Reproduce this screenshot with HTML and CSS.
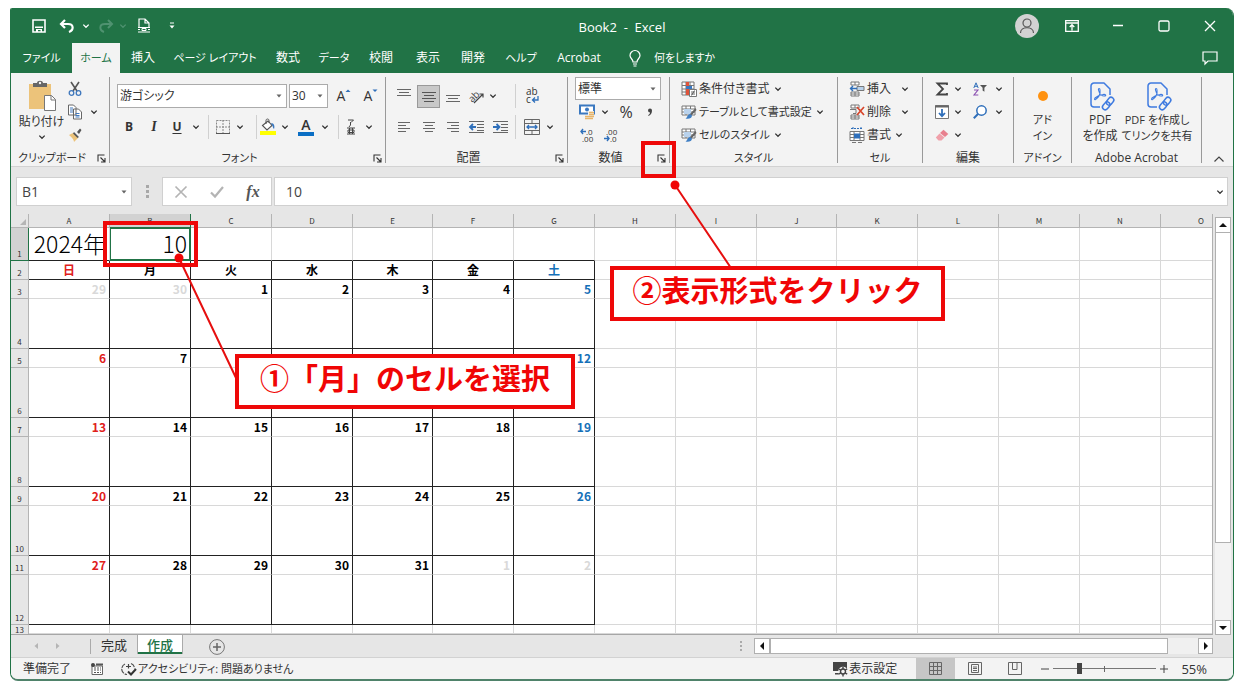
FILE: index.html
```html
<!DOCTYPE html>
<html lang="ja">
<head>
<meta charset="utf-8">
<meta name="viewport" content="width=device-width, initial-scale=1">
<title>Book2 - Excel</title>
<link rel="stylesheet" href="styles.css">
</head>
<body>
<svg class="sprite" aria-hidden="true">
  <symbol id="chev" viewBox="0 0 8 8"><path d="M1.3 2.6 4 5.3 6.7 2.6" fill="none" stroke="currentColor" stroke-width="1.3"/></symbol>
  <symbol id="caret" viewBox="0 0 8 8"><path d="M1.5 2.5h5L4 5.5z" fill="currentColor"/></symbol>
  <symbol id="launch" viewBox="0 0 9 9"><path d="M1 7.5V1h6.5M3.5 3.5l4 4M8 4v4H4" fill="none" stroke="currentColor" stroke-width="1.1"/></symbol>
  <symbol id="pdf" viewBox="0 0 26 30"><g fill="none" stroke="#3f7be0" stroke-width="1.5" stroke-linejoin="round"><path d="M10 25H4a3 3 0 0 1-3-3V4a3 3 0 0 1 3-3h10l6 6v6"/><path d="M5.500 17.500c3-2 5-6 4.500-9.500 0-2-2-2-1.500 0 .8 4 3.500 6.500 6.500 6 1.500-.5.5-2-2-1.500-3 .3-6 1.500-8 3.500-1 1.500-.3 2 .5 1.500z" stroke-width="1.100"/><g transform="rotate(-50 18.500 21.500)"><rect x="11" y="18.500" width="8.500" height="5.500" rx="2.700"/><rect x="17" y="18.500" width="8.500" height="5.500" rx="2.700"/></g></g></symbol>
  <symbol id="tbl" viewBox="0 0 16 16"><path d="M1 2h13v9H1zM1 5h13M1 8h13M5 2v9M9.500 2v9" fill="#fff" stroke="#777"/><path d="M3 5h7v5H3z" fill="#b9d2ec"/><path d="M14.500 4 9 10l1.500 1.500L15.500 6z" fill="#666"/><path d="M9 10c-3 .5-2 3-4.500 4.500 3 .8 6.500 0 6.500-3z" fill="#3f7fc4"/></symbol>
  <symbol id="cells" viewBox="0 0 16 16"><path d="M2 1h8v3H2zM6 1v3M2 11h8v4H2zM6 11v4M2 13h8" fill="#fff" stroke="#777"/></symbol>
</svg>

<div class="page">
<main class="window">

  <header class="titlebar">
    <div class="quick">
      <button aria-label="上書き保存"><svg width="14" height="14" viewBox="0 0 14 14"><path d="M1 1h12v12H1z" fill="none" stroke="#fff" stroke-width="1.6"/><path d="M3 7.500h8V9H3zM4 10h6v3H8.500v-2H6v2H4z" fill="#fff"/></svg></button>
      <button aria-label="元に戻す"><svg width="16" height="14" viewBox="0 0 16 14"><path d="M6 1 2 5l4 4M2 5h7c6 0 6 6 1 8" fill="none" stroke="#fff" stroke-width="2.2"/></svg></button>
      <button aria-label="元に戻す一覧"><svg class="chev"><use href="#chev"/></svg></button>
      <button class="dim" aria-label="やり直し"><svg width="16" height="14" viewBox="0 0 16 14"><path d="M10 1l4 4-4 4M14 5H7C1 5 1 11 6 13" fill="none" stroke="currentColor" stroke-width="2"/></svg></button>
      <button class="dim" aria-label="やり直し一覧"><svg class="chev"><use href="#chev"/></svg></button>
      <button aria-label="印刷プレビュー"><svg width="14" height="16" viewBox="0 0 14 16"><path d="M2 9V1h6l4 4v4M8 1v4h4" fill="none" stroke="#fff" stroke-width="1.200"/><path d="M1 9.500h12M1 11.500h2M11 11.500h2M5 10.500h4v2H5zM1 14h12" fill="none" stroke="#fff"/></svg></button>
      <button aria-label="クイック アクセスのカスタマイズ"><svg width="8" height="8" viewBox="0 0 8 8"><path d="M2 1h4" stroke="#fff"/><path d="M1.500 3.500h5L4 6.500z" fill="#fff"/></svg></button>
    </div>
    <h1 class="title">Book2&nbsp; -&nbsp; Excel</h1>
    <div class="controls">
      <button class="avatar" aria-label="アカウント"><svg width="24" height="24" viewBox="0 0 24 24"><circle cx="12" cy="12" r="12" fill="#d2d2d2"/><g fill="none" stroke="#555" stroke-width="1.200"><circle cx="12" cy="9" r="4"/><path d="M5.500 19c0-7 13-7 13 0"/></g></svg></button>
      <button aria-label="リボンの表示オプション"><svg width="14" height="12" viewBox="0 0 14 12"><path d="M.7.700h12.600v10.600H.7zM.7 3h12.600M7 10.500V5M4.700 7 7 4.700 9.300 7" fill="none" stroke="#fff" stroke-width="1.300"/></svg></button>
      <button aria-label="最小化"><svg width="12" height="12" viewBox="0 0 12 12"><path d="M1 5.500h10" stroke="#fff" stroke-width="1.300"/></svg></button>
      <button aria-label="最大化"><svg width="12" height="12" viewBox="0 0 12 12"><rect x="1" y="1" width="10" height="10" rx="1.500" fill="none" stroke="#fff" stroke-width="1.300"/></svg></button>
      <button aria-label="閉じる"><svg width="12" height="12" viewBox="0 0 12 12"><path d="M1 1l10 10M11 1 1 11" stroke="#fff" stroke-width="1.300"/></svg></button>
    </div>
  </header>

  <nav class="tabs">
    <button class="kana">ファイル</button><button class="kana active">ホーム</button><button>挿入</button><button class="kana">ページ レイアウト</button><button>数式</button><button class="kana">データ</button><button>校閲</button><button>表示</button><button>開発</button><button class="kana">ヘルプ</button><button>Acrobat</button>
    <button class="tell"><svg width="12" height="17" viewBox="0 0 12 17"><path d="M4 12c0-3-3-3.500-3-6.500a5 5 0 0 1 10 0c0 3-3 3.500-3 6.500zM4 14h4M4.500 16h3" fill="none" stroke="#fff" stroke-width="1.200"/></svg><span class="kana">何をしますか</span></button>
    <button class="comment" aria-label="コメント"><svg width="16" height="14" viewBox="0 0 16 14"><path d="M1 1h14v9H6l-3 3v-3H1z" fill="none" stroke="#fff" stroke-width="1.200"/></svg></button>
  </nav>

  <section class="ribbon" aria-label="ホーム">
    <div class="group">
      <div class="body clip">
        <button class="paste" aria-label="貼り付け"><svg width="32" height="32" viewBox="0 0 32 32"><path d="M3 4h22v25H3z" fill="#ecc37a"/><path d="M7 3h4c0-3 6-3 6 0h4v4H7z" fill="#666"/><circle cx="14" cy="3" r="1.200" fill="#f3f3f3"/><path d="M18.500 15.500h7l4 4v11h-11z" fill="#fff" stroke="#777"/><path d="M25 15.500v4.500h4.500" fill="none" stroke="#777"/></svg><span>貼り付け</span><svg class="chev"><use href="#chev"/></svg></button>
        <div class="clip-tools">
          <button aria-label="切り取り"><svg width="14" height="16" viewBox="0 0 14 16"><path d="M3 1l6 9M11 1 5 10" stroke="#555" stroke-width="1.600"/><circle cx="3.500" cy="12" r="2.300" fill="none" stroke="#4179bd" stroke-width="1.300"/><circle cx="10.500" cy="12" r="2.300" fill="none" stroke="#4179bd" stroke-width="1.300"/></svg></button><i></i>
          <button aria-label="コピー"><svg width="14" height="16" viewBox="0 0 14 16"><path d="M.5 1h5l2.500 2.500V11H.5zM5.500 5h5L13.500 8v7h-8z" fill="#fff" stroke="#666"/><path d="M2 4h3M2 6h3M2 8h3M7.500 9.500h4M7.500 11.500h4M7.500 13h4" stroke="#4179bd"/></svg></button><button aria-label="コピーの種類"><svg class="chev"><use href="#chev"/></svg></button>
          <button aria-label="書式のコピー"><svg width="14" height="14" viewBox="0 0 14 14"><path d="M1 7l4-2 5 5-4 4c0-3-3-5-5-7z" fill="#ecc37a"/><path d="M6 4l5 5-1.500 1L5 5.500zM9 4l3-3.500 1.500 1.500L11 6z" fill="#555"/></svg></button><i></i>
        </div>
      </div>
      <div class="foot"><span class="kana">クリップボード</span><button aria-label="クリップボードの詳細"><svg class="launch"><use href="#launch"/></svg></button></div>
    </div>

    <div class="group">
      <div class="body two font">
        <div class="row font1">
          <label class="combo"><select aria-label="フォント"><option>游ゴシック</option></select><svg class="caret"><use href="#caret"/></svg></label>
          <label class="combo"><select aria-label="フォント サイズ"><option>30</option></select><svg class="caret"><use href="#caret"/></svg></label>
          <button class="letter" aria-label="フォント サイズの拡大"><span>A</span><svg width="6" height="14" viewBox="0 0 6 14"><path d="M.5 4 3 1.500 5.500 4z" fill="#2f6fba"/></svg></button>
          <button class="letter" aria-label="フォント サイズの縮小"><span>A</span><svg width="6" height="14" viewBox="0 0 6 14"><path d="M.5 1.500 3 4l2.500-2.500z" fill="#2f6fba"/></svg></button>
        </div>
        <div class="row font2">
          <button class="b">B</button><button class="b it">I</button><button class="b un">U</button><button aria-label="下線の種類"><svg class="chev"><use href="#chev"/></svg></button><i class="sep"></i>
          <button aria-label="罫線"><svg width="14" height="14" viewBox="0 0 14 14"><path d="M.5.5h13v13H.5zM7 0v14M0 7h14" fill="none" stroke="#888" stroke-dasharray="2 1"/><path d="M0 13.500h14" stroke="#555"/></svg></button><button aria-label="罫線の種類"><svg class="chev"><use href="#chev"/></svg></button><i class="sep end"></i>
          <button aria-label="塗りつぶしの色"><svg width="16" height="18" viewBox="0 0 16 18"><path d="M2.500 7.500 8 3l4 4.500L7 12z" fill="#fff" stroke="#555" stroke-width="1.100"/><path d="M6 6V2.500c0-2 3-2 3 0V5" fill="none" stroke="#555"/><path d="M11 5c3 0 4 3 3 6-1.500-1-1-3-2-4z" fill="#3a78c0"/><path d="M0 13h16v4H0z" fill="#ff0"/></svg></button><button aria-label="色の選択"><svg class="chev"><use href="#chev"/></svg></button>
          <button class="fcolor">A</button><button aria-label="文字色の選択"><svg class="chev"><use href="#chev"/></svg></button><i class="sep end"></i>
          <button aria-label="ふりがな"><svg width="10" height="16" viewBox="0 0 10 16"><path d="M2 1h5.500L5 3.500M4.500 3v3L3 8M1 9h8M1 15h8M3.500 9v6M6.500 9v6M2 11h6v2.500H2z" fill="none" stroke="#444"/></svg></button><button aria-label="ふりがなの設定"><svg class="chev"><use href="#chev"/></svg></button>
        </div>
      </div>
      <div class="foot"><span class="kana">フォント</span><button aria-label="フォントの詳細"><svg class="launch"><use href="#launch"/></svg></button></div>
    </div>

    <div class="group">
      <div class="body two align">
        <div class="row agrid">
          <button aria-label="上揃え"><svg width="14" height="16" viewBox="0 0 14 16"><path d="M0 1.500h14M2 4.500h10M0 7.500h14" stroke="#666"/></svg></button>
          <button class="on" aria-label="上下中央揃え"><svg width="14" height="16" viewBox="0 0 14 16"><path d="M0 4.500h14M2 7.500h10M0 10.500h14M2 13.500h10" stroke="#555"/></svg></button>
          <button aria-label="下揃え"><svg width="14" height="16" viewBox="0 0 14 16"><path d="M0 7.500h14M2 10.500h10M0 13.500h14" stroke="#666"/></svg></button>
          <button aria-label="方向"><svg width="16" height="16" viewBox="0 0 16 16"><text x="-1" y="11" transform="rotate(-45 6 8)" font-size="10" fill="#444">ab</text><path d="M5 15 14 6M10.500 6H14v3.500" fill="none" stroke="#444" stroke-width="1.200"/></svg></button>
          <button class="start" aria-label="方向の選択"><svg class="chev"><use href="#chev"/></svg></button><i class="sep"></i>
          <button class="wrap" aria-label="折り返して全体を表示する"><svg width="14" height="18" viewBox="0 0 14 18"><text x="1" y="8" font-size="10" fill="#333">ab</text><text x="1" y="16" font-size="10" fill="#333">c</text><path d="M13 9v4H8M10 10.500 7.500 13l2.500 2.500" fill="none" stroke="#2f6fba" stroke-width="1.300"/></svg></button><i></i>
        </div>
        <div class="row agrid">
          <button aria-label="左揃え"><svg width="12" height="12" viewBox="0 0 12 12"><path d="M0 1.500h12M0 4.500h8M0 7.500h12M0 10.500h8" stroke="#666"/></svg></button>
          <button aria-label="中央揃え"><svg width="12" height="12" viewBox="0 0 12 12"><path d="M0 1.500h12M2 4.500h8M0 7.500h12M2 10.500h8" stroke="#666"/></svg></button>
          <button aria-label="右揃え"><svg width="12" height="12" viewBox="0 0 12 12"><path d="M0 1.500h12M4 4.500h8M0 7.500h12M4 10.500h8" stroke="#666"/></svg></button>
          <button aria-label="インデントを減らす"><svg width="16" height="14" viewBox="0 0 16 14"><path d="M0 1.500h15M8 4.500h7M8 7.500h7M8 10.500h7M0 12.500h15" stroke="#666"/><path d="M7 7H1M4 4 1 7l3 3" fill="none" stroke="#2f6fba" stroke-width="1.800"/></svg></button>
          <button aria-label="インデントを増やす"><svg width="16" height="14" viewBox="0 0 16 14"><path d="M0 1.500h15M8 4.500h7M8 7.500h7M8 10.500h7M0 12.500h15" stroke="#666"/><path d="M0 7h6M3.500 4l3 3-3 3" fill="none" stroke="#2f6fba" stroke-width="1.800"/></svg></button><i class="sep"></i>
          <button aria-label="セルを結合して中央揃え"><svg width="16" height="16" viewBox="0 0 16 16"><path d="M.5.500h15v15H.5zM.5 4.500h15M.5 11.500h15M8 .5v4M8 11.500v4" fill="none" stroke="#666"/><path d="M3 8h10M5 6 3 8l2 2M11 6l2 2-2 2" fill="none" stroke="#2f6fba" stroke-width="1.300"/></svg></button>
          <button aria-label="結合の種類"><svg class="chev"><use href="#chev"/></svg></button>
        </div>
      </div>
      <div class="foot"><span>配置</span><button aria-label="配置の詳細"><svg class="launch"><use href="#launch"/></svg></button></div>
    </div>

    <div class="group">
      <div class="body three number">
        <label class="combo"><select aria-label="表示形式"><option>標準</option></select><svg class="caret"><use href="#caret"/></svg></label>
        <div class="row ngrid">
          <button aria-label="通貨表示形式"><svg width="16" height="16" viewBox="0 0 16 16"><path d="M1 1.500h14v8H1z" fill="#fff" stroke="#3a78c0" stroke-width="2"/><circle cx="8" cy="5.500" r="2" fill="#3a78c0"/><path d="M9 7h6v8H5v-4h4z" fill="#f3f3f3"/><path d="M10 8.500h5M10 10.500h5M6 12.500h9M6 14.500h8" stroke="#e8b56a" stroke-width="1.400"/></svg></button><button aria-label="通貨の選択"><svg class="chev"><use href="#chev"/></svg></button><button class="pct">%</button><button aria-label="桁区切りスタイル"><svg width="6" height="8" viewBox="0 0 6 8"><path d="M1 2.500a2 2 0 0 1 4 0C5 5 4 7 1.500 8l-.3-.8C2.500 6.500 3 5.500 3 4.500a2 2 0 0 1-2-2z" fill="#444"/></svg></button>
        </div>
        <div class="row ngrid dec">
          <button aria-label="小数点以下の表示桁数を増やす"><svg width="14" height="16" viewBox="0 0 14 16"><path d="M6 4.500H1M3 2 1 4.500 3 7" fill="none" stroke="#2f6fba" stroke-width="1.400"/><text x="6" y="8" font-size="8" fill="#333">.0</text><text x="2" y="15" font-size="8" fill="#333">.00</text></svg></button>
          <button aria-label="小数点以下の表示桁数を減らす"><svg width="14" height="16" viewBox="0 0 14 16"><text x="2" y="8" font-size="8" fill="#333">.00</text><path d="M0 11.500h5M3 9l2 2.500L3 14" fill="none" stroke="#2f6fba" stroke-width="1.400"/><text x="6" y="15" font-size="8" fill="#333">.0</text></svg></button>
        </div>
      </div>
      <div class="foot"><span>数値</span><button aria-label="表示形式の詳細"><svg class="launch"><use href="#launch"/></svg></button></div>
    </div>

    <div class="group">
      <div class="body three style">
        <button class="item"><svg width="16" height="16" viewBox="0 0 16 16"><path d="M1 1h12v13H1zM1 4.500h12M1 8h12M1 11h12M5 1v13M9 1v13" fill="#fff" stroke="#777"/><path d="M5 1h3v4H5zM5 8h3v6H5z" fill="#e0533a"/><path d="M5 5h6v3H5z" fill="#3a78c0"/><path d="M8.500 8.500h7v7h-7z" fill="#fff" stroke="#777"/><path d="M10 11h4M10 13h4M13.500 9.500l-3 5" stroke="#444" stroke-width=".8"/></svg><span>条件付き書式</span><svg class="chev"><use href="#chev"/></svg></button>
        <button class="item"><svg width="16" height="16"><use href="#tbl"/></svg><span class="kana">テーブルとして書式設定</span><svg class="chev"><use href="#chev"/></svg></button>
        <button class="item"><svg width="16" height="16"><use href="#tbl"/></svg><span class="kana">セルのスタイル</span><svg class="chev"><use href="#chev"/></svg></button>
      </div>
      <div class="foot"><span class="kana">スタイル</span></div>
    </div>

    <div class="group">
      <div class="body three cellg">
        <button class="item wide"><svg width="16" height="16" viewBox="0 0 16 16"><use href="#cells"/><path d="M8 5.500h7v4H8z" fill="#b9d2ec" stroke="#777"/><path d="M8 7.500H1M4 5 1.500 7.500 4 10" fill="none" stroke="#2f6fba" stroke-width="1.400"/></svg><span>挿入</span><svg class="chev"><use href="#chev"/></svg></button>
        <button class="item wide"><svg width="16" height="16" viewBox="0 0 16 16"><use href="#cells"/><path d="M1 5.500h6v4H4" fill="none" stroke="#777"/><path d="M8 3l7 8M15 3 8 11" stroke="#d8452a" stroke-width="1.700"/></svg><span>削除</span><svg class="chev"><use href="#chev"/></svg></button>
        <button class="item"><svg width="16" height="16" viewBox="0 0 16 16"><path d="M2 1.500h12M4 0v3M12 0v3" stroke="#2f6fba" stroke-dasharray="2 1"/><path d="M1 4.500h14v9H1zM1 7.500h14M1 10.500h14M5 4.500v9M11 4.500v9" fill="#fff" stroke="#777"/><path d="M5 6.500h6v5H5z" fill="#2f6fba"/><path d="M3 15.500h4M9 15.500h4" stroke="#777"/></svg><span>書式</span><svg class="chev"><use href="#chev"/></svg></button>
      </div>
      <div class="foot"><span class="kana">セル</span></div>
    </div>

    <div class="group">
      <div class="body three edit">
        <div class="row egrid">
          <button aria-label="オート SUM"><svg width="12" height="14" viewBox="0 0 12 14"><path d="M11 3V1.500H1.500L7 7l-5.500 5.500H11V11" fill="none" stroke="#444" stroke-width="1.800"/></svg></button><button aria-label="関数の選択"><svg class="chev"><use href="#chev"/></svg></button>
          <button aria-label="並べ替えとフィルター"><svg width="14" height="14" viewBox="0 0 14 14"><path d="M.8 6 3 .8 5.200 6M1.500 4.300h3" fill="none" stroke="#2f6fba"/><path d="M1 8h4L1 13h4.300" fill="none" stroke="#8a4fb0" stroke-width="1.100"/><path d="M7 3h7l-2.600 2.800v4L9.600 8.500V5.800z" fill="#555"/></svg></button><button aria-label="並べ替えの選択"><svg class="chev"><use href="#chev"/></svg></button>
        </div>
        <div class="row egrid">
          <button aria-label="フィル"><svg width="14" height="14" viewBox="0 0 14 14"><path d="M.5.500h13v13H.5z" fill="#fff" stroke="#777"/><path d="M0 1.500h14" stroke="#666" stroke-width="2"/><path d="M7 4v7M4 8l3 3.200L10 8" fill="none" stroke="#2f6fba" stroke-width="1.800"/></svg></button><button aria-label="フィルの選択"><svg class="chev"><use href="#chev"/></svg></button>
          <button aria-label="検索と選択"><svg width="14" height="14" viewBox="0 0 14 14"><circle cx="8.500" cy="5.500" r="4.700" fill="#fff" stroke="#2f6fba" stroke-width="1.500"/><path d="M5.200 8.800.8 13.200" stroke="#2f6fba" stroke-width="2"/></svg></button><button aria-label="検索の選択"><svg class="chev"><use href="#chev"/></svg></button>
        </div>
        <div class="row egrid">
          <button aria-label="クリア"><svg width="14" height="12" viewBox="0 0 14 12"><path d="M8.500.800 13.300 5 10 8 5 4z" fill="#e8808e"/><path d="M4.500 4.500 9.500 8.500 6.500 11.500H3.500L.8 8.500z" fill="#f0a0aa"/></svg></button><button aria-label="クリアの選択"><svg class="chev"><use href="#chev"/></svg></button>
        </div>
      </div>
      <div class="foot"><span>編集</span></div>
    </div>

    <div class="group">
      <div class="body big">
        <button><svg width="26" height="30" viewBox="0 0 26 30"><circle cx="13" cy="14" r="5" fill="#ff9210"/></svg><span class="kana">アド<br>イン</span></button>
      </div>
      <div class="foot"><span class="kana">アドイン</span></div>
    </div>

    <div class="group">
      <div class="body big acro">
        <button><svg width="26" height="30"><use href="#pdf"/></svg><span>PDF<br>を作成</span></button>
        <button class="share"><svg width="26" height="30"><use href="#pdf"/></svg><span>PDF を作成し<br>てリンクを共有</span></button>
      </div>
      <div class="foot"><span>Adobe Acrobat</span></div>
    </div>
    <button class="collapse" aria-label="リボンを折りたたむ"><svg width="12" height="8" viewBox="0 0 12 8"><path d="M1.500 6.500 6 2l4.500 4.500" fill="none" stroke="#444" stroke-width="1.200"/></svg></button>
  </section>

  <section class="formula">
    <label class="combo name"><input aria-label="名前ボックス" value="B1"><svg class="caret"><use href="#caret"/></svg></label>
    <svg class="dots" width="3" height="13" viewBox="0 0 3 13"><path d="M0 0h3v3H0zM0 5h3v3H0zM0 10h3v3H0z" fill="#a8a8a8"/></svg>
    <div class="fx">
      <button aria-label="キャンセル"><svg width="14" height="12" viewBox="0 0 14 12"><path d="M1.500.5l11 11M12.500.5l-11 11" stroke="#b4b4b4" stroke-width="1.700"/></svg></button>
      <button aria-label="入力"><svg width="14" height="12" viewBox="0 0 14 12"><path d="M1 6.500 5 10.500 13 1" fill="none" stroke="#b4b4b4" stroke-width="2.200"/></svg></button>
      <button class="fn">fx</button>
    </div>
    <label class="combo bar"><input aria-label="数式バー" value="10"><svg class="chev"><use href="#chev"/></svg></label>
  </section>

  <section class="sheet">
    <div class="grid">
      <table>
        <colgroup><col class="rh"><col><col><col><col><col class="n"><col><col><col><col><col class="n"><col><col><col><col><col></colgroup>
        <thead><tr><th class="corner" aria-label="すべて選択"><svg width="6" height="6" viewBox="0 0 6 6"><path d="M6 0v6H0z" fill="#b5b5b5"/></svg></th><th>A<th class="sel">B<th>C<th>D<th>E<th>F<th>G<th>H<th>I<th>J<th>K<th>L<th>M<th>N<th>O</tr></thead>
        <tbody>
        <tr class="r1"><th class="sel">1</th><td class="k">2024年<td class="k cur">10<td class="k"><td class="k"><td class="k"><td class="k"><td class="k"><td><td><td><td><td><td><td><td></tr>
        <tr class="r2"><th>2</th><td class="k red">日<td class="k">月<td class="k">火<td class="k">水<td class="k">木<td class="k">金<td class="k blue">土<td><td><td><td><td><td><td><td></tr>
        <tr class="d"><th>3</th><td class="k off">29<td class="k off">30<td class="k">1<td class="k">2<td class="k">3<td class="k">4<td class="k blue">5<td><td><td><td><td><td><td><td></tr>
        <tr class="m"><th>4</th><td class="k"><td class="k"><td class="k"><td class="k"><td class="k"><td class="k"><td class="k"><td><td><td><td><td><td><td><td></tr>
        <tr class="d"><th>5</th><td class="k red">6<td class="k">7<td class="k"><td class="k"><td class="k"><td class="k"><td class="k blue">12<td><td><td><td><td><td><td><td></tr>
        <tr class="m"><th>6</th><td class="k"><td class="k"><td class="k"><td class="k"><td class="k"><td class="k"><td class="k"><td><td><td><td><td><td><td><td></tr>
        <tr class="d"><th>7</th><td class="k red">13<td class="k">14<td class="k">15<td class="k">16<td class="k">17<td class="k">18<td class="k blue">19<td><td><td><td><td><td><td><td></tr>
        <tr class="m"><th>8</th><td class="k"><td class="k"><td class="k"><td class="k"><td class="k"><td class="k"><td class="k"><td><td><td><td><td><td><td><td></tr>
        <tr class="d"><th>9</th><td class="k red">20<td class="k">21<td class="k">22<td class="k">23<td class="k">24<td class="k">25<td class="k blue">26<td><td><td><td><td><td><td><td></tr>
        <tr class="m"><th>10</th><td class="k"><td class="k"><td class="k"><td class="k"><td class="k"><td class="k"><td class="k"><td><td><td><td><td><td><td><td></tr>
        <tr class="d"><th>11</th><td class="k red">27<td class="k">28<td class="k">29<td class="k">30<td class="k">31<td class="k off">1<td class="k off">2<td><td><td><td><td><td><td><td></tr>
        <tr class="m"><th>12</th><td class="k"><td class="k"><td class="k"><td class="k"><td class="k"><td class="k"><td class="k"><td><td><td><td><td><td><td><td></tr>
        <tr class="last"><th>13</th><td><td><td><td><td><td><td><td><td><td><td><td><td><td><td></tr>
        </tbody>
      </table>
    </div>
    <div class="vscroll">
      <button aria-label="上へ"><svg width="8" height="6" viewBox="0 0 8 6"><path d="M0 5h8L4 1z" fill="#111"/></svg></button>
      <div class="vthumb"></div>
      <button aria-label="下へ"><svg width="8" height="6" viewBox="0 0 8 6"><path d="M0 1h8L4 5z" fill="#111"/></svg></button>
    </div>
  </section>

  <section class="sheetbar">
    <div class="nav">
      <button aria-label="前のシート"><svg width="6" height="8" viewBox="0 0 6 8"><path d="M5 1v6L1.500 4z" fill="#b5b5b5"/></svg></button>
      <button aria-label="次のシート"><svg width="6" height="8" viewBox="0 0 6 8"><path d="M1 1v6l3.500-3z" fill="#b5b5b5"/></svg></button>
    </div>
    <button class="stab">完成</button><button class="stab active">作成</button>
    <button class="add" aria-label="新しいシート"><svg width="16" height="16" viewBox="0 0 16 16"><circle cx="8" cy="8" r="7.400" fill="none" stroke="#777"/><path d="M8 4v8M4 8h8" stroke="#666" stroke-width="1.500"/></svg></button>
    <svg class="grip" width="2" height="11" viewBox="0 0 2 11"><path d="M0 0h2v2H0zM0 4h2v2H0zM0 8h2v2H0z" fill="#aaa"/></svg>
    <div class="hscroll">
      <button aria-label="左へ"><svg width="6" height="8" viewBox="0 0 6 8"><path d="M5 0v8L1 4z" fill="#111"/></svg></button>
      <div class="hthumb"></div>
      <button aria-label="右へ"><svg width="6" height="8" viewBox="0 0 6 8"><path d="M1 0v8l4-4z" fill="#111"/></svg></button>
    </div>
  </section>

  <footer class="status">
    <span class="ready">準備完了</span>
    <svg class="macro" width="12" height="12" viewBox="0 0 12 12"><path d="M1 3h10.500v8.500H1z" fill="#fff" stroke="#666"/><path d="M5 .5h7v2H5z" fill="#555"/><path d="M3 5h7M3 7h7M3 9.500h7" stroke="#555" stroke-dasharray="2 1"/><circle cx="2" cy="2" r="2" fill="#444"/></svg>
    <button class="access"><svg width="16" height="14" viewBox="0 0 16 14"><path d="M4 2a5.500 5.500 0 0 0 2 10.500M10 1.500c2.500 1 3.500 3 3.500 5" fill="none" stroke="#555" stroke-width="1.200" stroke-dasharray="5 1"/><path d="M5 4.500h5M7.500 2v4.500" stroke="#444" stroke-width="1.200" fill="none"/><path d="M7 9.500l3 3 5-5.500" fill="none" stroke="#333" stroke-width="2"/></svg><span class="kana">アクセシビリティ: 問題ありません</span></button>
    <button class="display"><svg width="16" height="16" viewBox="0 0 16 16"><path d="M1 1h14v9H1zM3 12h6v1.500H3z" fill="#444"/><circle cx="11" cy="10.500" r="4.800" fill="#f3f3f3"/><circle cx="11" cy="10.500" r="2.500" fill="none" stroke="#444" stroke-width="1.400"/><path d="M11 6v2M11 13v2.500M6.800 8l2 1.200M13.200 12l2 1.200M6.800 13l2-1.200M13.200 9l2-1.200" stroke="#444" stroke-width="1.400"/></svg><span>表示設定</span></button>
    <button class="view on" aria-label="標準"><svg width="13" height="13" viewBox="0 0 13 13"><path d="M.5.500h12v12H.5zM.5 4.500h12M.5 8.500h12M4.500.500v12M8.500.500v12" fill="none" stroke="#666"/></svg></button>
    <button class="view" aria-label="ページ レイアウト"><svg width="14" height="13" viewBox="0 0 14 13"><path d="M.5.500h13v12H.5zM3.500 2.500h7v8h-7zM5 5h4M5 6.500h4M5 8.500h4" fill="none" stroke="#666"/></svg></button>
    <button class="view" aria-label="改ページ プレビュー"><svg width="14" height="13" viewBox="0 0 14 13"><path d="M.5.500h13v12H.5zM4.500.500v7h4.500v-7" fill="none" stroke="#666"/></svg></button>
    <div class="zoom"><button aria-label="縮小"><svg width="8" height="8" viewBox="0 0 8 8"><path d="M0 4h8" stroke="#444"/></svg></button><input type="range" aria-label="ズーム" min="0" max="100" value="24"><button aria-label="拡大"><svg width="8" height="8" viewBox="0 0 8 8"><path d="M0 4h8M4 0v8" stroke="#444"/></svg></button></div>
    <button class="percent">55%</button>
  </footer>
</main>

<svg class="pointer" width="1" height="1" aria-hidden="true"><g stroke="#e60f0f" stroke-width="2" fill="#f00505"><path d="M179 258 237 380M675 185 731 268"/><g stroke="none"><circle cx="179" cy="258" r="4.500"/><circle cx="675" cy="185" r="4.500"/></g></g></svg>
<div class="mark cell-mark"></div>
<div class="mark launch-mark"></div>
<p class="mark callout one">①「月」のセルを選択</p>
<p class="mark callout two-step">②表示形式をクリック</p>
</div>
</body>
</html>
```
FILE: styles.css
```css
* { box-sizing: border-box; }
body { margin: 0; background: #fff; color: #333; font: 12px/16px "Open Sans", "Noto Sans CJK JP", sans-serif; font-feature-settings: "palt"; }
button, input, select { font: inherit; font-feature-settings: inherit; color: inherit; background: none; border: 0; padding: 0; margin: 0; border-radius: 0; white-space: nowrap; }
button { display: flex; align-items: center; justify-content: center; }
svg { display: block; flex: none; overflow: visible; }
.sprite { position: absolute; width: 0; height: 0; overflow: hidden; }
.chev, .caret { width: 8px; height: 8px; }
.caret { color: #666; }
.launch { width: 9px; height: 9px; }
.kana { font-size: 11px; }

.page { position: relative; padding: 8px 7px 8px 10px; }
.window { border: 1px solid #217346; border-top: 0; border-bottom: 2px solid #4f826a; border-radius: 2px 8px 8px 8px; overflow: hidden; background: #e6e6e6; }

/* title bar and tabs */
.titlebar { display: grid; grid-template-columns: 1fr auto 1fr; align-items: center; height: 35px; background: #217346; color: #fff; }
.quick { display: grid; grid-template-columns: 28px 28px 10px 30px 4px 38px 18px; padding-left: 14px; }
.dim { color: #4f9270; }
.title { margin: 0; font-size: 13px; font-weight: 400; padding-top: 3px; }
.controls { display: flex; justify-content: flex-end; align-items: center; }
.controls button { width: 46px; height: 32px; }
.controls .avatar { width: 24px; margin-right: 10px; }
.tabs { display: grid; grid-template-columns: 61px 48px 46px 98px 48px 44px 50px 44px 46px 50px 66px auto 1fr; height: 30px; background: #217346; color: #fff; }
.tabs .active { background: #f3f3f3; color: #217346; }
.tabs .tell { gap: 13px; padding-left: 17px; }
.tabs .comment { justify-self: end; width: 46px; }

/* ribbon */
.ribbon { display: grid; grid-template-columns: 99px 276px 182px 102px 168px 85px 91px 58px 130px 1fr; background: #f3f3f3; padding: 4px 0 0; border-bottom: 1px solid #d2d2d2; }
.group { background: linear-gradient(#999, #999) right top / 1px 86px no-repeat; display: flex; flex-direction: column; height: 89px; padding-right: 1px; }
.body { flex: 1; }
.foot { display: flex; height: 16px; align-items: center; }
.foot span { flex: 1; text-align: center; }
.foot button { width: 16px; height: 16px; }
.row { display: grid; align-items: center; justify-items: center; }
.sep { width: 1px; height: 24px; background: #d0d0d0; }
.sep.end { justify-self: end; }
.combo { display: grid; align-items: center; background: #fff; border: 1px solid #ababab; }
.combo > * { grid-area: 1 / 1; }
.combo select, .combo input { appearance: none; width: 100%; height: 100%; padding-left: 2px; outline: 0; min-width: 0; }
.combo svg { justify-self: end; margin-right: 3px; pointer-events: none; }

.clip { display: grid; grid-template-columns: 57px 1fr; }
.paste { flex-direction: column; padding-left: 4px; justify-content: flex-start; padding-top: 3px; }
.paste span { margin-top: 2px; }
.paste .chev { margin-top: 3px; }
.clip-tools { display: grid; grid-template-columns: 14px 16px; grid-auto-rows: 23px; justify-items: end; align-items: center; }
.two { padding-top: 7px; }
.two .row { height: 24px; margin-bottom: 7px; }
.font1 { grid-template-columns: 170px 39px 28px 22px; column-gap: 2px; padding-left: 7px; justify-content: start; }
.font1 .combo { width: 100%; height: 24px; }
.letter { align-items: flex-start; font-size: 14px; }
.font2 { grid-template-columns: 24px 26px 20px 18px 6px 24px 10px 12px 22px 12px 30px 8px 10px 24px 12px; padding-left: 7px; justify-content: start; }
.b { font-weight: 700; }
.it { font-family: "Liberation Serif", serif; font-style: italic; font-size: 14px; }
.un { text-decoration: underline; text-underline-offset: 2px; }
.fcolor { width: 16px; height: 18px; border-bottom: 4px solid #0a6ec4; font-size: 14px; font-weight: 600; }
.agrid { grid-template-columns: 24px 25px 24px 24px 24px 4px 30px 6px; padding-left: 6px; justify-content: start; }
.agrid .on { width: 23px; height: 23px; background: #c8c8c8; border: 1px solid #999; }
.agrid .start { justify-self: start; }
.three { display: grid; grid-template-rows: 23px 23px 23px; align-items: center; align-content: start; }
.number { padding-left: 7px; }
.number .combo { width: 86px; height: 23px; }
.ngrid { grid-template-columns: 24px 12px 30px 18px; justify-content: start; }
.dec { grid-template-columns: 24px 24px; }
.pct { font-size: 16px; }
.item { gap: 2px; height: 23px; justify-content: flex-start; }
.item .chev { margin-left: 2px; }
.item.wide .chev { margin-left: 8px; }
.style, .cellg { padding-left: 11px; }
.egrid { grid-template-columns: 26px 6px 38px 0; padding-left: 6px; justify-content: start; }
.big { display: flex; justify-content: center; }
.big button { flex-direction: column; justify-content: flex-start; padding-top: 5px; width: 56px; }
.acro { justify-content: flex-start; }
.acro svg { margin-left: 6px; }
.acro .share { width: 58px; }
.share span { font-size: 11px; }
.collapse { justify-self: end; align-self: end; width: 28px; height: 14px; }

/* formula bar */
.formula { display: grid; grid-template-columns: 116px 30px 110px 1fr; padding: 10px 5px 8px; align-items: center; }
.formula .combo, .fx { height: 29px; border: 1px solid #d0d0d0; background: #fff; }
.formula input { font-size: 14px; padding-left: 5px; color: #444; }
.formula .bar { margin-left: 2px; }
.formula .bar input { padding-left: 11px; }
.dots { justify-self: center; }
.fx { display: grid; grid-template-columns: 36px 36px 1fr; }
.fn { font: italic 700 16px "Liberation Serif", serif; color: #555; }

/* worksheet */
.sheet { display: flex; }
.grid { flex: 1; min-width: 0; overflow: hidden; border-right: 1px solid #b0b0b0; border-bottom: 1px solid #a6a6a6; }
table { table-layout: fixed; width: 1231px; border-collapse: separate; border-spacing: 0; font-family: "Noto Sans CJK JP", sans-serif; font-feature-settings: normal; background: #fff; }
col { width: 81px; }
col.n { width: 80px; }
col.rh { width: 18px; }
th, td { padding: 0; border-right: 1px solid #d8d8d8; border-bottom: 1px solid #d8d8d8; overflow: hidden; white-space: nowrap; }
th { background: #e6e6e6; font-size: 8px; line-height: 8px; font-weight: 400; color: #333; border-color: #b4b4b4; }
thead th { height: 14px; vertical-align: middle; }
thead th.sel, tbody th.sel { background: #d2d2d2; border-color: #217346; }
tbody th { vertical-align: bottom; padding-bottom: 2px; }
.corner svg { margin: 2px 2px 0 auto; }
td { text-align: right; padding-right: 3px; color: #000; font-weight: 700; font-size: 12px; line-height: 16px; }
.r1 td { height: 33px; font-size: 23px; line-height: 28px; font-weight: 300; padding-bottom: 3px; }
.r1 .k { border-bottom-color: #222; }
.r2 td { height: 19px; text-align: center; padding-right: 0; }
.d td { height: 19px; }
.m td { height: 50px; }
.last th { height: 9px; padding: 0; border-bottom: 0; }
.r2 .k, .m .k { border-bottom-color: #222; }
.r2 .k, .m .k, .d .k { border-right-color: #222; }
.r1 .cur { box-shadow: inset 1px 1px #217346, inset -1px -1px #217346; border-color: #217346; }
td.red { color: #e0201b; }
td.blue { color: #1570b8; }
td.off { color: #d9d9d9; }

.vscroll { width: 16px; margin: 3px 2px 0; display: grid; grid-template-rows: 16px 1fr 15px; background: #f3f3f3; }
.vscroll button, .hscroll button { background: #fff; border: 1px solid #b0b0b0; }
.vthumb { height: 80%; background: #fff; border: 1px solid #b0b0b0; border-top: 0; }

.sheetbar { display: flex; align-items: center; height: 22px; }
.nav { display: flex; gap: 16px; padding: 0 29px 0 22px; border-right: 1px solid #aaa; height: 15px; }
.stab { width: 46px; height: 19px; align-self: flex-start; font-size: 13px; }
.stab.active { background: #fff; color: #217346; font-weight: 500; border: solid #aaa; border-width: 0 1px; box-shadow: inset 0 -2px #217346; }
.add { margin: 1px auto 0 26px; }
.grip { margin-right: 12px; }
.hscroll { display: grid; grid-template-columns: 16px 1fr 15px; width: 459px; height: 16px; margin-right: 20px; background: #f0f0f0; }
.hthumb { width: 93%; background: #fff; border: 1px solid #b0b0b0; }

.status { display: flex; align-items: center; height: 22px; background: #f3f3f3; border-top: 1px solid #d2d2d2; padding: 0 26px 0 12px; }
.macro { margin: 0 18px 0 20px; }
.access { gap: 1px; margin-right: auto; }
.display { gap: 1px; margin-right: 19px; }
.view { width: 40px; height: 21px; }
.view.on { background: #c6c6c6; width: 39px; }
.zoom { display: flex; align-items: center; gap: 4px; margin: 0 13px 0 6px; }
.zoom input { appearance: none; width: 103px; height: 12px; background: linear-gradient(#666, #666) 50% 50% / 1px 6px no-repeat, linear-gradient(#777, #777) 50% 50% / 100% 1px no-repeat; }
.zoom input::-webkit-slider-thumb { appearance: none; width: 5px; height: 11px; background: #444; }
.percent { font-size: 13px; }

/* step annotations laid over the window */
.pointer, .mark { position: absolute; pointer-events: none; }
.pointer { left: 0; top: 0; }
.mark { margin: 0; border: 4px solid #ee0808; }
.cell-mark { left: 103px; top: 221px; width: 95px; height: 46px; }
.launch-mark { left: 641px; top: 141px; width: 35px; height: 37px; }
.callout { background: #fff; color: #f00505; height: 55px; font: 700 29px/38px "Noto Sans CJK JP", sans-serif; text-align: center; white-space: nowrap; }
.one { left: 235px; top: 354px; width: 340px; }
.two-step { left: 610px; top: 266px; width: 335px; }
```
